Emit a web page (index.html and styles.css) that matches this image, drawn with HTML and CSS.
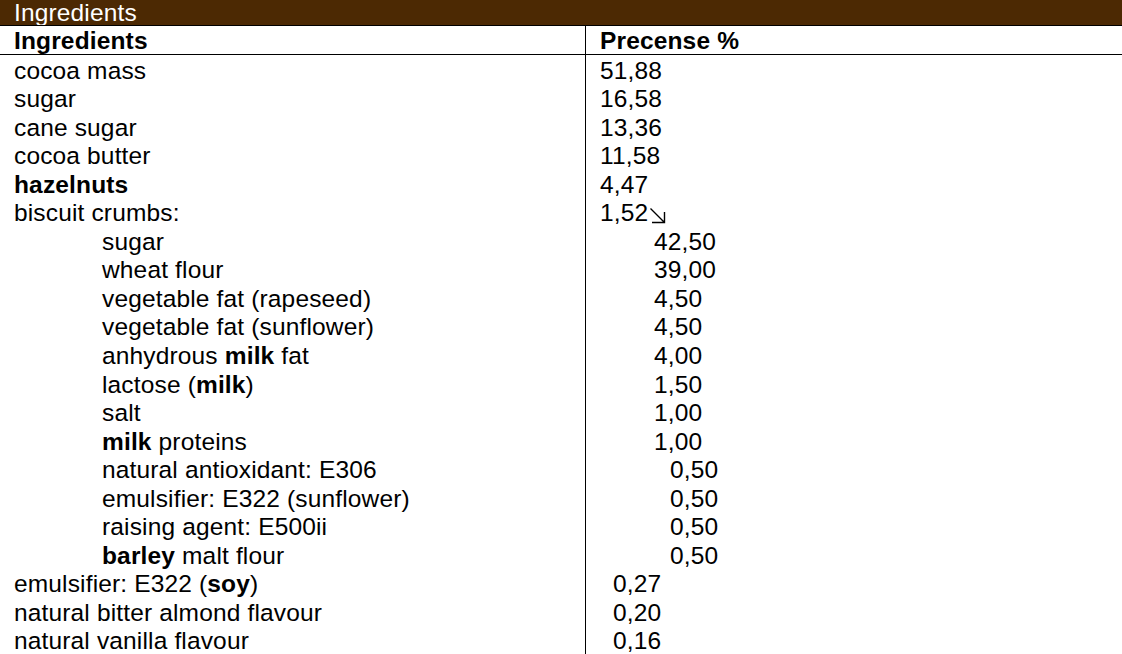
FILE: index.html
```html
<!DOCTYPE html>
<html lang="en">
<head>
<meta charset="utf-8">
<title>Ingredients</title>
<link rel="stylesheet" href="styles.css">
</head>
<body>
<div class="sheet">
  <div class="title">Ingredients</div>
  <div class="table">
    <div class="cell head name">Ingredients</div>
    <div class="cell head val">Precense %</div>

    <div class="cell name">cocoa mass</div><div class="cell val">51,88</div>
    <div class="cell name">sugar</div><div class="cell val">16,58</div>
    <div class="cell name">cane sugar</div><div class="cell val">13,36</div>
    <div class="cell name">cocoa butter</div><div class="cell val">11,58</div>
    <div class="cell name"><b>hazelnuts</b></div><div class="cell val">4,47</div>
    <div class="cell name">biscuit crumbs:</div><div class="cell val">1,52<svg class="arrow" width="17" height="17" viewBox="0 0 17 17"><path d="M1.5 1.5 L15.5 15.5 M3 15.5 H15.5 V5" fill="none" stroke="#000" stroke-width="1.4"/></svg></div>

    <div class="cell name sub">sugar</div><div class="cell val sub">42,50</div>
    <div class="cell name sub">wheat flour</div><div class="cell val sub">39,00</div>
    <div class="cell name sub">vegetable fat (rapeseed)</div><div class="cell val sub">4,50</div>
    <div class="cell name sub">vegetable fat (sunflower)</div><div class="cell val sub">4,50</div>
    <div class="cell name sub">anhydrous <b>milk</b> fat</div><div class="cell val sub">4,00</div>
    <div class="cell name sub">lactose (<b>milk</b>)</div><div class="cell val sub">1,50</div>
    <div class="cell name sub">salt</div><div class="cell val sub">1,00</div>
    <div class="cell name sub"><b>milk</b> proteins</div><div class="cell val sub">1,00</div>
    <div class="cell name sub">natural antioxidant: E306</div><div class="cell val sub small">0,50</div>
    <div class="cell name sub">emulsifier: E322 (sunflower)</div><div class="cell val sub small">0,50</div>
    <div class="cell name sub">raising agent: E500ii</div><div class="cell val sub small">0,50</div>
    <div class="cell name sub"><b>barley</b> malt flour</div><div class="cell val sub small">0,50</div>

    <div class="cell name">emulsifier: E322 (<b>soy</b>)</div><div class="cell val small">0,27</div>
    <div class="cell name">natural bitter almond flavour</div><div class="cell val small">0,20</div>
    <div class="cell name">natural vanilla flavour</div><div class="cell val small">0,16</div>
  </div>
</div>
</body>
</html>
```

FILE: styles.css
```css
html, body {
  margin: 0;
  padding: 0;
  background: #fff;
}
body {
  font-family: "Liberation Sans", Arial, sans-serif;
  font-size: 24.5px;
  letter-spacing: 0.15px;
  color: #000;
}
.sheet {
  width: 1122px;
  overflow: hidden;
}
.title {
  height: 25px;
  line-height: 25px;
  background: #4c2903;
  color: #fff;
  padding-left: 14px;
  border-bottom: 1px solid #000;
  overflow: hidden;
}
.table {
  display: grid;
  grid-template-columns: 585px 1fr;
  grid-auto-rows: 28.55px;
}
.cell {
  box-sizing: border-box;
  line-height: 28.55px;
  padding-top: 2px;
  white-space: nowrap;
}
.name {
  padding-left: 14px;
}
.val {
  border-left: 1px solid #000;
  padding-left: 14px;
}
.head {
  font-weight: bold;
  height: 29px;
  line-height: 29px;
  padding-top: 0;
  border-bottom: 1.5px solid #000;
}
.table > .head { align-self: start; }
.name.sub {
  padding-left: 102px;
}
.val.small {
  padding-left: 27px;
}
.val.sub {
  padding-left: 68px;
}
.val.sub.small {
  padding-left: 84px;
}
.arrow {
  margin-left: 1px;
  vertical-align: -3px;
}
b {
  font-weight: bold;
}
```
